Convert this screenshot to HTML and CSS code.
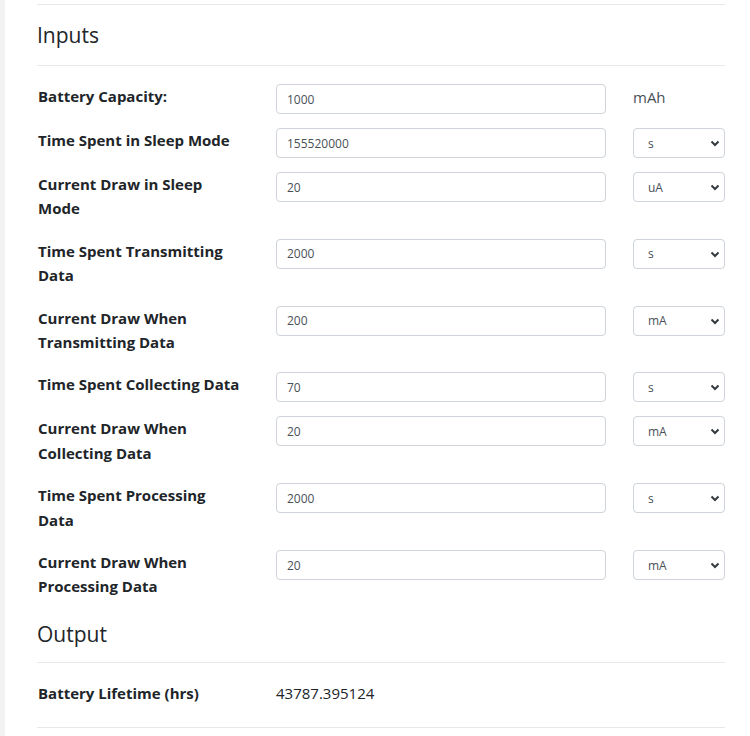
FILE: index.html
```html
<!DOCTYPE html>
<html>
<head>
<meta charset="utf-8">
<link rel="stylesheet" href="styles.css">
</head>
<body>
<div class="page">
  <div class="sidebar"></div>
  <main class="content">
    <h2 class="section-title first">Inputs</h2>
    <form class="form">
      <div class="row">
        <label class="label">Battery Capacity:</label>
        <div class="field"><input class="input" type="text" value="1000"></div>
        <div class="unit-text">mAh</div>
      </div>
      <div class="row">
        <label class="label">Time Spent in Sleep Mode</label>
        <div class="field"><input class="input" type="text" value="155520000"></div>
        <div class="unit"><select class="select"><option>s</option></select><svg class="chev" width="10" height="8" viewBox="0 0 10 8"><path d="M1.5 2.5 L5 6 L8.5 2.5" fill="none" stroke="#343a40" stroke-width="2"/></svg></div>
      </div>
      <div class="row">
        <label class="label">Current Draw in Sleep Mode</label>
        <div class="field"><input class="input" type="text" value="20"></div>
        <div class="unit"><select class="select"><option>uA</option></select><svg class="chev" width="10" height="8" viewBox="0 0 10 8"><path d="M1.5 2.5 L5 6 L8.5 2.5" fill="none" stroke="#343a40" stroke-width="2"/></svg></div>
      </div>
      <div class="row">
        <label class="label">Time Spent Transmitting Data</label>
        <div class="field"><input class="input" type="text" value="2000"></div>
        <div class="unit"><select class="select"><option>s</option></select><svg class="chev" width="10" height="8" viewBox="0 0 10 8"><path d="M1.5 2.5 L5 6 L8.5 2.5" fill="none" stroke="#343a40" stroke-width="2"/></svg></div>
      </div>
      <div class="row">
        <label class="label">Current Draw When Transmitting Data</label>
        <div class="field"><input class="input" type="text" value="200"></div>
        <div class="unit"><select class="select"><option>mA</option></select><svg class="chev" width="10" height="8" viewBox="0 0 10 8"><path d="M1.5 2.5 L5 6 L8.5 2.5" fill="none" stroke="#343a40" stroke-width="2"/></svg></div>
      </div>
      <div class="row">
        <label class="label">Time Spent Collecting Data</label>
        <div class="field"><input class="input" type="text" value="70"></div>
        <div class="unit"><select class="select"><option>s</option></select><svg class="chev" width="10" height="8" viewBox="0 0 10 8"><path d="M1.5 2.5 L5 6 L8.5 2.5" fill="none" stroke="#343a40" stroke-width="2"/></svg></div>
      </div>
      <div class="row">
        <label class="label">Current Draw When Collecting Data</label>
        <div class="field"><input class="input" type="text" value="20"></div>
        <div class="unit"><select class="select"><option>mA</option></select><svg class="chev" width="10" height="8" viewBox="0 0 10 8"><path d="M1.5 2.5 L5 6 L8.5 2.5" fill="none" stroke="#343a40" stroke-width="2"/></svg></div>
      </div>
      <div class="row">
        <label class="label">Time Spent Processing Data</label>
        <div class="field"><input class="input" type="text" value="2000"></div>
        <div class="unit"><select class="select"><option>s</option></select><svg class="chev" width="10" height="8" viewBox="0 0 10 8"><path d="M1.5 2.5 L5 6 L8.5 2.5" fill="none" stroke="#343a40" stroke-width="2"/></svg></div>
      </div>
      <div class="row">
        <label class="label">Current Draw When Processing Data</label>
        <div class="field"><input class="input" type="text" value="20"></div>
        <div class="unit"><select class="select"><option>mA</option></select><svg class="chev" width="10" height="8" viewBox="0 0 10 8"><path d="M1.5 2.5 L5 6 L8.5 2.5" fill="none" stroke="#343a40" stroke-width="2"/></svg></div>
      </div>
    </form>
    <h2 class="section-title output">Output</h2>
    <div class="result">
      <div class="label">Battery Lifetime (hrs)</div>
      <div class="result-value">43787.395124</div>
    </div>
  </main>
</div>
</body>
</html>
```

FILE: styles.css
```css
* { box-sizing: border-box; }
html, body { margin: 0; padding: 0; background: #fff; }
body {
  font-family: "Open Sans", "Noto Sans", sans-serif;
  color: #212529;
}
.page { display: flex; min-height: 736px; }
.sidebar { width: 5px; background: #f2f2f2; flex: none; }
.content {
  width: 688px;
  margin-left: 32px;
  padding-top: 4px;
}
.section-title {
  margin: 0;
  font-size: 21px;
  font-weight: 400;
  line-height: 30px;
  color: #212529;
  padding: 14px 0 15px;
  border-bottom: 1px solid #e8e8e8;
}
.section-title.first { border-top: 1px solid #e8e8e8; padding-top: 15px; }
.section-title.output { padding: 2px 0 13px; }
.form { padding-top: 18px; }
.row {
  display: flex;
  align-items: flex-start;
  margin-bottom: 14px;
}
.label {
  width: 239px;
  flex: none;
  font-weight: 700;
  font-size: 15px;
  line-height: 24.4px;
  padding: 0 34px 4px 1px;
  color: #212529;
}
.field { width: 330px; flex: none; }
.input {
  display: block;
  width: 100%;
  height: 30px;
  border: 1px solid #ced4da;
  border-radius: 4px;
  padding: 0 10px;
  font-family: inherit;
  font-size: 12px;
  color: #495057;
  background: #fff;
}
.unit-text {
  margin-left: 27px;
  font-size: 15px;
  line-height: 26px;
  color: #495057;
}
.unit { position: relative; margin-left: 27px; width: 92px; flex: none; }
.select {
  display: block;
  width: 100%;
  height: 30px;
  appearance: none;
  -webkit-appearance: none;
  border: 1px solid #ced4da;
  border-radius: 4px;
  padding: 0 14px;
  font-family: inherit;
  font-size: 12px;
  color: #495057;
  background: #fff;
}
.chev { position: absolute; right: 5px; top: 11px; pointer-events: none; }
.result {
  display: flex;
  align-items: center;
  padding: 18px 0 22px;
  border-bottom: 1px solid #e8e8e8;
}
.result .label { padding: 0 34px 0 1px; }
.result-value { font-size: 15px; color: #212529; }
```
